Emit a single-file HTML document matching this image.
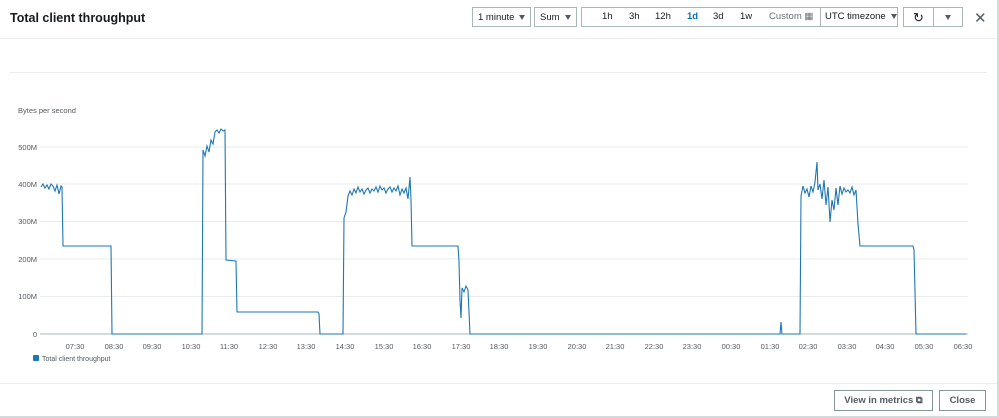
<!DOCTYPE html>
<html><head><style>
body{margin:0;width:999px;height:418px;overflow:hidden;background:#fff;font-family:"Liberation Sans",sans-serif;position:relative;color:#16191f}
.t{position:absolute;left:10px;top:11px;font-size:12.5px;font-weight:bold}
.b{position:absolute;top:7px;height:20px;border:1px solid #aab7b8;background:#fff;font-size:9.5px;line-height:19px;box-sizing:border-box;white-space:nowrap}
.tri{display:inline-block;width:0;height:0;border-left:3.5px solid transparent;border-right:3.5px solid transparent;border-top:5px solid #545b64;vertical-align:middle;margin-left:5px}
.hr{position:absolute;left:0;width:999px;height:1px;background:#eaeded}
.btn{position:absolute;top:390px;height:21px;border:1px solid #879596;box-sizing:border-box;font-size:9.5px;font-weight:bold;line-height:19px;text-align:center;color:#545b64;white-space:nowrap}
</style></head><body>
<div class="t">Total client throughput</div>
<div class="b" style="left:472px;width:59px;padding-left:5px">1 minute<span class="tri"></span></div>
<div class="b" style="left:534px;width:43px;padding-left:5px">Sum<span class="tri"></span></div>
<div class="b" style="left:581px;width:317px"></div>
<div style="position:absolute;top:7px;height:20px;line-height:20px;font-size:9.5px;left:581px;width:317px;white-space:nowrap">
<span style="position:absolute;left:21px">1h</span><span style="position:absolute;left:48px">3h</span><span style="position:absolute;left:74px">12h</span><span style="position:absolute;left:106px;color:#0073bb;font-weight:bold">1d</span><span style="position:absolute;left:132px">3d</span><span style="position:absolute;left:159px">1w</span><span style="position:absolute;left:188px;color:#687078">Custom ▦</span>
<span style="position:absolute;left:239px;top:0;width:1px;height:20px;background:#aab7b8"></span>
<span style="position:absolute;left:244px">UTC timezone<span class="tri"></span></span></div>
<div class="b" style="left:903px;width:31px;text-align:center;font-size:13px">&#8635;</div>
<div class="b" style="left:933px;width:30px;text-align:center"><span class="tri" style="margin:0"></span></div>
<div style="position:absolute;left:974px;top:9px;font-size:15px;color:#545b64">✕</div>
<div class="hr" style="top:38px"></div>
<div class="hr" style="top:72px;left:10px;width:977px"></div>
<div class="hr" style="top:383px"></div>
<div style="position:absolute;right:0;top:0;width:2px;height:418px;background:#d5dbdb"></div>
<div style="position:absolute;bottom:0;left:0;width:999px;height:2px;background:#d5dbdb"></div>
<svg style="position:absolute;left:0;top:0" width="999" height="418" font-family="Liberation Sans,sans-serif" font-size="7.5" fill="#545b64">
<text x="18" y="113">Bytes per second</text>
<g stroke="#eaeded"><line x1="40" x2="968" y1="147" y2="147"/><line x1="40" x2="968" y1="184" y2="184"/><line x1="40" x2="968" y1="221.5" y2="221.5"/><line x1="40" x2="968" y1="259" y2="259"/><line x1="40" x2="968" y1="296.5" y2="296.5"/><line x1="40" x2="968" y1="334" y2="334" stroke="#aab7b8"/></g>
<g text-anchor="end"><text x="37" y="150">500M</text><text x="37" y="187">400M</text><text x="37" y="224">300M</text><text x="37" y="262">200M</text><text x="37" y="299">100M</text><text x="37" y="337">0</text></g>
<g text-anchor="middle">
<text x="75" y="349">07:30</text><text x="114" y="349">08:30</text><text x="152" y="349">09:30</text><text x="191" y="349">10:30</text><text x="229" y="349">11:30</text><text x="268" y="349">12:30</text><text x="306" y="349">13:30</text><text x="345" y="349">14:30</text><text x="384" y="349">15:30</text><text x="422" y="349">16:30</text><text x="461" y="349">17:30</text><text x="499" y="349">18:30</text><text x="538" y="349">19:30</text><text x="577" y="349">20:30</text><text x="615" y="349">21:30</text><text x="654" y="349">22:30</text><text x="692" y="349">23:30</text><text x="731" y="349">00:30</text><text x="770" y="349">01:30</text><text x="808" y="349">02:30</text><text x="847" y="349">03:30</text><text x="885" y="349">04:30</text><text x="924" y="349">05:30</text><text x="963" y="349">06:30</text></g>
<path fill="none" stroke="#1f77b4" stroke-width="1.1" d="M41 187 L43 184 45 188 47 185 49 189 51 184 53 186 55 191 57 185 59 194 61 186 62 187 63 246 L111 246 112 334 L202 334 203 150 205 156 207 146 209 152 211 140 213 144 215 132 217 130 219 133 221 129 223 131 225 130 226 260 L236 261 237 312 L318 312 319 314 320 334 L343 334 344 218 346 212 348 196 350 191 352 195 354 189 356 193 358 187 360 192 362 189 364 194 366 190 368 188 370 193 372 189 374 191 376 187 378 192 380 186 382 190 384 188 386 193 388 189 390 187 392 192 394 188 396 191 398 186 400 195 402 189 404 193 406 188 408 199 410 177 411 200 412 246 L458 246 459 262 460 300 461 318 462 288 464 292 466 286 468 290 470 334 L780 334 781 322 782 334 L800 334 801 196 803 186 805 193 807 189 809 197 811 186 813 192 815 182 817 162 818 190 820 184 822 199 824 180 826 205 828 187 830 222 832 200 834 210 836 188 838 205 840 186 842 194 844 188 846 192 848 190 850 193 852 187 854 195 856 190 858 224 860 246 L913 246 914 250 916 334 L966 334"/>
<rect x="33" y="355" width="6" height="6" rx="1" fill="#1f77b4"/>
<text x="42" y="361" font-size="7">Total client throughput</text>
</svg>
<div class="btn" style="left:834px;width:99px">View in metrics ⧉</div>
<div class="btn" style="left:939px;width:47px">Close</div>
</body></html>
